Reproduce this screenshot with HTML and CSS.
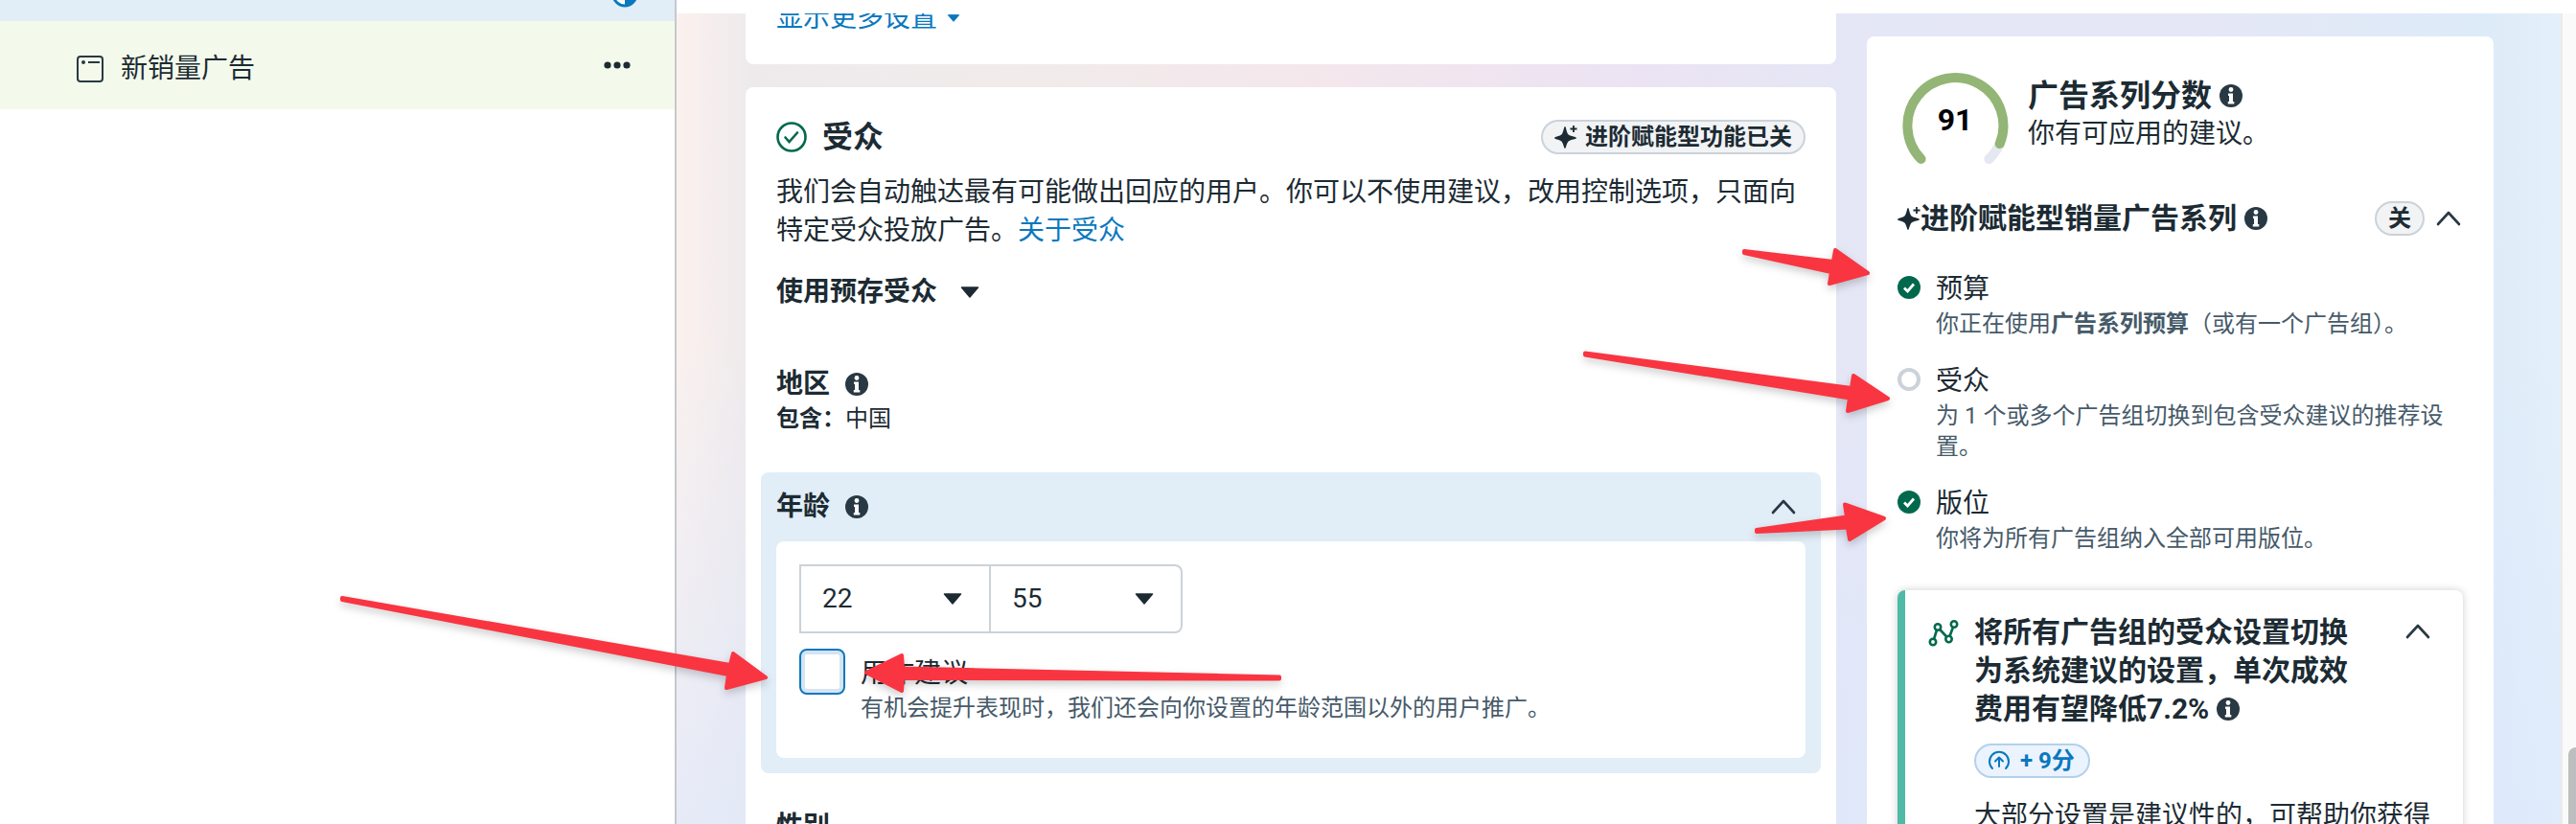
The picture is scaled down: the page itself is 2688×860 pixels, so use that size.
FILE: index.html
```html
<!DOCTYPE html>
<html lang="zh-CN">
<head>
  <meta charset="UTF-8">
  <meta name="viewport" content="width=device-width, initial-scale=1.0">
  <title>新销量广告</title>
  <link rel="stylesheet" href="styles.css">
</head>
<body>

  <!-- Shared icons -->
  <svg class="sprite" aria-hidden="true">
    <symbol id="icon-info" viewBox="0 0 24 24">
      <circle cx="12" cy="12" r="12" fill="#283943"/>
      <circle cx="12" cy="5.5" r="2.4" fill="#fff"/>
      <path d="M9 9.500h5v8.500h1.300v2.500H8.800V18H10v-6H9z" fill="#fff"/>
    </symbol>
    <symbol id="icon-spark" viewBox="0 0 24 24">
      <path d="M11 1c1.200 0 1.500 7 4 8.800 2 1.500 8 2 8 3.200s-6 1.700-8 3.200C12.500 18 12.200 24 11 24s-1.500-6-4-7.800C5 14.700 0 14.200 0 13s5-1.700 7-3.200C9.500 8 9.800 1 11 1z" fill="#1c2b33"/>
      <path d="M20 0v7M16.500 3.500h7" stroke="#1c2b33" stroke-width="1.800"/>
    </symbol>
    <symbol id="icon-up" viewBox="0 0 26 16">
      <path d="M2 14L13 2l11 12" fill="none" stroke="#283943" stroke-width="2.600" stroke-linecap="round" stroke-linejoin="round"/>
    </symbol>
    <symbol id="icon-down" viewBox="0 0 20 12">
      <path d="M1.500 1h17L10 11z" fill="currentColor" stroke="currentColor" stroke-width="1.500" stroke-linejoin="round"/>
    </symbol>
    <symbol id="icon-done" viewBox="0 0 24 24">
      <circle cx="12" cy="12" r="12" fill="#00694d"/>
      <path d="M7 12.500l3.500 3.500L17 8.500" fill="none" stroke="#fff" stroke-width="2.800"/>
    </symbol>
  </svg>

  <div class="app">
    <nav class="sidebar">
      <div class="tree-row selected">
        <svg class="status" viewBox="0 0 28 28"><circle cx="14" cy="14" r="12" fill="#fff" stroke="#0a78be" stroke-width="3"/><path d="M14 2a12 12 0 0 1 0 24z" fill="#0a78be"/></svg>
      </div>
      <div class="tree-row ad">
        <svg class="ad-icon" viewBox="0 0 28 28"><rect x="1" y="1" width="26" height="26" rx="3" fill="none" stroke="#283943" stroke-width="2"/><circle cx="7" cy="7" r="2" fill="#283943"/><path d="M12 7h12" stroke="#283943" stroke-width="2"/></svg>
        <a href="#" class="ad-name">新销量广告</a>
        <button class="icon-button" aria-label="更多操作">
          <svg class="dots" viewBox="0 0 28 8"><circle cx="4" cy="4" r="3.600"/><circle cx="14" cy="4" r="3.600"/><circle cx="24" cy="4" r="3.600"/></svg>
        </button>
      </div>
    </nav>

    <div class="workspace">
      <main class="editor">
        <section class="card card-previous">
          <button class="more-link">显示更多设置 <svg class="small-caret"><use href="#icon-down"/></svg></button>
        </section>

        <section class="card audience">
          <header class="card-header">
            <svg class="ok" viewBox="0 0 32 32"><circle cx="16" cy="16" r="14.500" fill="none" stroke="#00694d" stroke-width="2.600"/><path d="M9.500 16.500l4 4.500L22 11.500" fill="none" stroke="#00694d" stroke-width="2.600" stroke-linecap="round"/></svg>
            <h2>受众</h2>
            <span class="pill"><svg class="pill-spark"><use href="#icon-spark"/></svg>进阶赋能型功能已关</span>
          </header>
          <p class="intro">我们会自动触达最有可能做出回应的用户。你可以不使用建议，改用控制选项，只面向特定受众投放广告。<a href="#">关于受众</a></p>
          <button class="saved">使用预存受众 <svg class="caret"><use href="#icon-down"/></svg></button>

          <h3 class="field-title">地区 <svg class="info"><use href="#icon-info"/></svg></h3>
          <p class="included"><b>包含：</b>中国</p>

          <div class="age-box">
            <div class="age-header">
              <h3 class="field-title">年龄 <svg class="info"><use href="#icon-info"/></svg></h3>
              <button class="icon-button" aria-label="收起年龄"><svg class="chevron"><use href="#icon-up"/></svg></button>
            </div>
            <div class="age-body">
              <div class="age-range">
                <div class="select-wrap">
                  <select aria-label="最小年龄"><option>22</option></select>
                  <svg class="caret"><use href="#icon-down"/></svg>
                </div>
                <div class="select-wrap">
                  <select aria-label="最大年龄"><option>55</option></select>
                  <svg class="caret"><use href="#icon-down"/></svg>
                </div>
              </div>
              <div class="suggest">
                <input type="checkbox" id="ageSuggest">
                <div class="suggest-text">
                  <label for="ageSuggest">用作建议</label>
                  <p class="hint">有机会提升表现时，我们还会向你设置的年龄范围以外的用户推广。</p>
                </div>
              </div>
            </div>
          </div>

          <h3 class="field-title gender">性别</h3>
        </section>
      </main>

      <aside class="score-panel">
        <div class="score">
          <svg class="gauge" viewBox="0 0 112 112" role="img" aria-label="91">
            <path d="M102.700 76A50 50 0 0 1 91.400 92" fill="none" stroke="#e5e7f1" stroke-width="10" stroke-linecap="round"/>
            <path d="M20.600 92A50 50 0 1 1 102.700 76" fill="none" stroke="#93b575" stroke-width="10" stroke-linecap="round"/>
            <text x="56" y="62" text-anchor="middle" class="gauge-value">91</text>
          </svg>
          <div>
            <h2>广告系列分数 <svg class="info"><use href="#icon-info"/></svg></h2>
            <p class="score-note">你有可应用的建议。</p>
          </div>
        </div>

        <div class="advantage">
          <svg class="spark"><use href="#icon-spark"/></svg>
          <h3>进阶赋能型销量广告系列</h3>
          <svg class="info"><use href="#icon-info"/></svg>
          <span class="pill off">关</span>
          <button class="icon-button" aria-label="收起"><svg class="chevron"><use href="#icon-up"/></svg></button>
        </div>

        <ul class="checks">
          <li>
            <svg class="state"><use href="#icon-done"/></svg>
            <div>
              <h4>预算</h4>
              <p class="hint">你正在使用<b>广告系列预算</b>（或有一个广告组）。</p>
            </div>
          </li>
          <li>
            <svg class="state" viewBox="0 0 24 24"><circle cx="12" cy="12" r="10" fill="none" stroke="#cbd2d9" stroke-width="4"/></svg>
            <div>
              <h4>受众</h4>
              <p class="hint">为 1 个或多个广告组切换到包含受众建议的推荐设置。</p>
            </div>
          </li>
          <li>
            <svg class="state"><use href="#icon-done"/></svg>
            <div>
              <h4>版位</h4>
              <p class="hint">你将为所有广告组纳入全部可用版位。</p>
            </div>
          </li>
        </ul>

        <article class="tip">
          <svg class="tip-icon" viewBox="0 0 32 28" fill="none" stroke="#00694d" stroke-width="2.600">
            <circle cx="5" cy="23" r="3.200"/><circle cx="10" cy="7.500" r="3.200"/><circle cx="21.500" cy="20" r="3.200"/><circle cx="27" cy="4.500" r="3.200"/>
            <path d="M6 20l3-9.500M12.200 10l7 7.500M22.500 17l3.500-9.500"/>
          </svg>
          <div class="tip-main">
            <h3>将所有广告组的受众设置切换为系统建议的设置，单次成效费用有望降低7.2% <svg class="info"><use href="#icon-info"/></svg></h3>
            <span class="points">
              <svg viewBox="0 0 24 22" fill="none" stroke="#0a78be" stroke-width="2" stroke-linecap="round" stroke-linejoin="round"><path d="M5 19a10 10 0 1 1 14 0M12 17V8M8 11.500l4-4 4 4"/></svg>
              + 9分
            </span>
            <p class="tip-text">大部分设置是建议性的，可帮助你获得</p>
          </div>
          <button class="icon-button" aria-label="收起建议"><svg class="chevron"><use href="#icon-up"/></svg></button>
        </article>
      </aside>
    </div>

    <div class="scroll-track"><div class="scroll-thumb"></div></div>
  </div>

  <!-- Annotation arrows -->
  <svg class="arrows" width="2688" height="860" aria-hidden="true">
    <path d="M357 624L762 694 765 682 799 707 758 718 760 704 357 626z"/>
    <path d="M904 702L941 684 942 697.500 1335 706.500 1335 708.500 942 708 941 721z"/>
    <path d="M1820 262L1913 273 1915 261 1949 285 1909 296 1911 284 1820 264z"/>
    <path d="M1654 368.500L1932 405 1934 392 1970 416 1928 429 1930 415.500 1654 370.500z"/>
    <path d="M1833 553L1927 539.500 1925 526.500 1966 541 1930 563 1928 550.500 1833 555z"/>
  </svg>

</body>
</html>
```
FILE: styles.css
```css
/* General */
* {
  box-sizing: border-box;
}

body {
  margin: 0;
  font-family: Roboto, "Noto Sans CJK SC", sans-serif;
  font-size: 28px;
  line-height: 40px;
  color: #1c2b33;
  background-color: #ffffff;
  overflow: hidden;
}

h2, h3, h4, p, ul {
  margin: 0;
  padding: 0;
}

h4 {
  font-size: 28px;
  font-weight: 400;
}

a {
  color: #0a78be;
  text-decoration: none;
}

button {
  font: inherit;
  color: inherit;
  background: none;
  border: none;
  padding: 0;
  cursor: pointer;
}

svg {
  flex: none;
}

.sprite {
  display: none;
}

.info,
.state,
.spark {
  width: 24px;
  height: 24px;
}

.caret {
  width: 20px;
  height: 12px;
}

.chevron {
  display: block;
  width: 26px;
  height: 16px;
}

.hint {
  font-size: 24px;
  line-height: 32px;
  color: #465a69;
}

.app {
  display: flex;
  height: 100vh;
}

/* Left tree */
.sidebar {
  flex: none;
  width: 706px;
  border-right: 2px solid #c5c9cd;
}

.tree-row {
  display: flex;
  align-items: center;
  padding: 8px 46px 0 80px;
}

.tree-row.selected {
  height: 22px;
  background-color: #e1edf7;
  align-items: flex-end;
  justify-content: flex-end;
  padding: 0 38px 14px 0;
}

.status {
  width: 28px;
  height: 28px;
}

.tree-row.ad {
  height: 92px;
  background-color: #f4faeb;
}

.ad-icon {
  width: 28px;
  height: 28px;
  margin-right: 18px;
}

.ad-name {
  color: #1c2b33;
  flex: 1;
}

.dots {
  display: block;
  width: 28px;
  height: 8px;
  margin-bottom: 8px;
  fill: #1c2b33;
}

/* Workspace */
.workspace {
  flex: 1;
  display: flex;
  gap: 32px;
  padding: 0 70px 0 72px;
  border-top: 14px solid #ffffff;
  background:
    linear-gradient(to bottom, rgba(222, 232, 252, 0) 40%, rgba(222, 232, 252, 0.7) 100%),
    linear-gradient(to right, #fbf1ee 0%, #eeeaec 4%, #f1ebeb 18%, #f4e7ec 34%, #ece3f3 50%, #e4e7f6 64%, #e6e7f6 80%, #ddebf8 96%, #e4f0fa 100%);
  overflow: hidden;
}

.editor {
  flex: 1;
  display: flex;
  flex-direction: column;
  gap: 24px;
}

.card {
  flex: none;
  background-color: #ffffff;
  border-radius: 8px;
  padding: 32px;
}

.card-previous {
  margin-top: -15px;
  padding: 0 32px 28px;
}

.more-link {
  display: flex;
  align-items: center;
  gap: 10px;
  color: #0a78be;
}

.small-caret {
  width: 14px;
  height: 8px;
}

.card-header {
  display: flex;
  align-items: center;
  gap: 16px;
  height: 40px;
  margin-bottom: 18px;
}

.card-header h2 {
  flex: 1;
  font-size: 32px;
}

.ok {
  width: 32px;
  height: 32px;
}

.pill {
  display: flex;
  align-items: center;
  gap: 8px;
  height: 36px;
  padding: 0 12px;
  border: 2px solid #cbd2d9;
  border-radius: 18px;
  background-color: #f1f3f5;
  font-size: 24px;
  font-weight: 700;
  line-height: 32px;
}

.pill-spark {
  width: 24px;
  height: 24px;
}

.saved {
  display: flex;
  align-items: center;
  gap: 24px;
  margin: 24px 0 56px;
  font-weight: 700;
}

.field-title {
  display: flex;
  align-items: center;
  gap: 16px;
  font-size: 28px;
}

.included {
  font-size: 24px;
  line-height: 32px;
}

/* Age */
.age-box {
  margin: 40px -16px 36px;
  padding: 16px;
  border-radius: 8px;
  background-color: #e1edf7;
}

.age-header {
  display: flex;
  align-items: center;
  justify-content: space-between;
  padding-right: 10px;
  margin-bottom: 16px;
}

.age-body {
  padding: 24px 24px 36px;
  border-radius: 8px;
  background-color: #ffffff;
}

.age-range {
  display: flex;
  margin-bottom: 16px;
}

.select-wrap {
  display: grid;
  align-items: center;
  width: 200px;
  height: 72px;
  border: 2px solid #cbd2d9;
}

.select-wrap + .select-wrap {
  border-left: none;
  border-radius: 0 8px 8px 0;
}

.select-wrap > * {
  grid-area: 1 / 1;
}

.select-wrap .caret {
  justify-self: end;
  margin-right: 28px;
  pointer-events: none;
}

.select-wrap select {
  appearance: none;
  width: 100%;
  height: 100%;
  padding: 0 22px;
  border: none;
  background: none;
  font: inherit;
  color: inherit;
}

.suggest {
  display: flex;
  gap: 16px;
}

.suggest input {
  appearance: none;
  flex: none;
  width: 48px;
  height: 48px;
  margin: 0;
  border: 2px solid #0a78be;
  border-radius: 8px;
  background-color: #ffffff;
  box-shadow: inset 0 0 0 4px #d5e4f1;
}

.suggest-text {
  padding-top: 6px;
}

.suggest-text label {
  display: block;
}

/* Score panel */
.score-panel {
  flex: none;
  width: 654px;
  height: 1000px;
  margin-top: 24px;
  padding: 36px 32px;
  border-radius: 8px;
  background-color: #ffffff;
}

.score {
  display: flex;
  gap: 20px;
  padding-left: 4px;
  margin-bottom: 22px;
}

.gauge {
  width: 112px;
  height: 112px;
}

.gauge-value {
  font-size: 32px;
  font-weight: 700;
  fill: #000000;
}

.score h2 {
  display: flex;
  align-items: center;
  gap: 8px;
  margin-top: 6px;
  font-size: 32px;
}

.advantage {
  display: flex;
  align-items: center;
  height: 40px;
  margin-bottom: 34px;
  padding-right: 2px;
}

.advantage h3 {
  margin-right: 8px;
  font-size: 30px;
}

.off {
  margin-left: auto;
  margin-right: 12px;
}

.checks {
  display: flex;
  flex-direction: column;
  gap: 24px;
  list-style: none;
}

.checks li {
  display: flex;
  gap: 16px;
}

.state {
  margin-top: 6px;
}

/* Suggestion */
.tip {
  display: flex;
  align-items: flex-start;
  margin-top: 38px;
  padding: 24px 34px 24px 24px;
  border-left: 8px solid #4fbaa6;
  border-radius: 8px;
  background-color: #ffffff;
  box-shadow: 0 0 8px rgba(0, 0, 0, 0.2);
}

.tip-icon {
  width: 32px;
  height: 28px;
  margin: 7px 16px 0 0;
}

.tip-main {
  flex: 1;
}

.tip h3 {
  width: 400px;
  font-size: 30px;
}

.tip h3 .info {
  vertical-align: -2px;
}

.tip .chevron {
  margin-top: 11px;
}

.tip > .icon-button {
  margin-left: -26px;
}

.points {
  display: inline-flex;
  align-items: center;
  gap: 10px;
  height: 36px;
  margin: 16px 0 20px;
  padding: 0 14px 0 12px;
  border: 2px solid #b3d1eb;
  border-radius: 18px;
  background-color: #ebf3fe;
  color: #0a78be;
  font-size: 24px;
  font-weight: 700;
  line-height: 32px;
}

.points svg {
  width: 24px;
  height: 22px;
}

/* Page scrollbar */
.scroll-track {
  flex: none;
  display: flex;
  width: 16px;
  margin-top: 14px;
  padding: 766px 0 0 6px;
  border-left: 2px solid #ebebeb;
  background-color: #fafafa;
}

.scroll-thumb {
  flex: 1;
  border-radius: 8px 0 0 0;
  background-color: #bcbebf;
}

/* Arrows lie over the whole page */
.arrows {
  position: absolute;
  top: 0;
  left: 0;
  pointer-events: none;
  fill: #f93541;
  stroke: #f93541;
  stroke-width: 4px;
  stroke-linejoin: round;
  filter: drop-shadow(0 4px 4px rgba(0, 0, 0, 0.2));
}
```
